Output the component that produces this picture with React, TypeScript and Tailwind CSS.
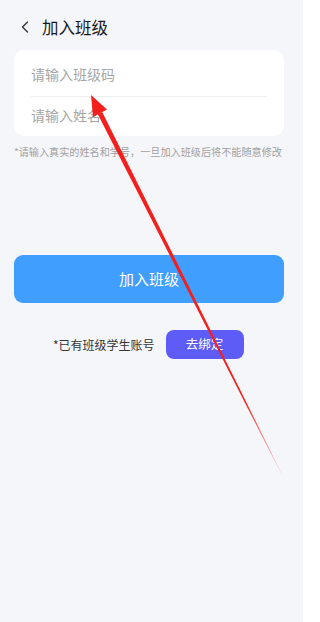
import { ChevronLeft } from "lucide-react";

function Arrow() {
  return (
    <svg
      className="pointer-events-none absolute left-0 top-0"
      width="303"
      height="622"
      viewBox="0 0 303 622"
    >
      <defs>
        <linearGradient id="tail" x1="100" y1="113" x2="281" y2="473" gradientUnits="userSpaceOnUse">
          <stop offset="0" stopColor="#f41f1a" />
          <stop offset="0.8" stopColor="#f41f1a" />
          <stop offset="1" stopColor="#f41f1a" stopOpacity="0.1" />
        </linearGradient>
      </defs>
      <polygon points="102.2,112 97.8,114.2 281,473.5 281.6,473.2" fill="url(#tail)" />
      <polygon points="91,95 107,109.5 93,117" fill="#f41f1a" />
    </svg>
  );
}

export default function App() {
  const font = "font-['Noto_Sans_CJK_SC','Noto_Sans',sans-serif]";

  return (
    <div className={`relative h-[622px] w-[303px] overflow-hidden bg-[#f5f6fa] ${font}`}>
      <div className="flex h-[50px] items-center pl-[15px] pt-[4px]">
        <ChevronLeft className="size-[20px] text-[#333]" strokeWidth={1.6} />
        <span className="ml-[7px] text-[16.5px] font-normal text-[#1a1a1a]">加入班级</span>
      </div>

      <div className="ml-[14px] w-[270px] rounded-[10px] bg-white px-[17px]">
        <div className="flex h-[47px] items-center border-b border-[#eeeeee] pt-[2px] text-[14px] text-[#a6a6a6]">
          请输入班级码
        </div>
        <div className="flex h-[39px] items-center pb-[2px] text-[14px] text-[#a6a6a6]">
          请输入姓名
        </div>
      </div>

      <p className="ml-[14px] mt-[9px] text-[10.15px] leading-[14px] text-[#a0a0a0]">
        *请输入真实的姓名和学号，一旦加入班级后将不能随意修改
      </p>

      <button className="ml-[14px] mt-[96px] flex h-[48px] w-[270px] items-center justify-center rounded-[9px] bg-[#409efe] text-[15px] text-white">
        加入班级
      </button>

      <div className="mt-[27px] flex items-center pl-[53px]">
        <span className="text-[12px] text-[#333]">*已有班级学生账号</span>
        <button className="ml-[11px] flex h-[29px] w-[78px] items-center justify-center rounded-[8px] bg-[#5e5cf7] text-[12.5px] text-white">
          去绑定
        </button>
      </div>

      <Arrow />
    </div>
  );
}
